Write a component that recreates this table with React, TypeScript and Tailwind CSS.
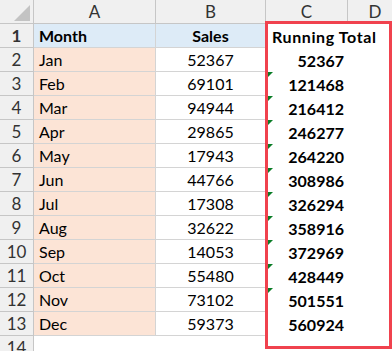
import React from "react";

const rows = [
  { m: "Jan", s: 52367, t: 52367 },
  { m: "Feb", s: 69101, t: 121468 },
  { m: "Mar", s: 94944, t: 216412 },
  { m: "Apr", s: 29865, t: 246277 },
  { m: "May", s: 17943, t: 264220 },
  { m: "Jun", s: 44766, t: 308986 },
  { m: "Jul", s: 17308, t: 326294 },
  { m: "Aug", s: 32622, t: 358916 },
  { m: "Sep", s: 14053, t: 372969 },
  { m: "Oct", s: 55480, t: 428449 },
  { m: "Nov", s: 73102, t: 501551 },
  { m: "Dec", s: 59373, t: 560924 },
];

function RowHead({ n }: { n: number }) {
  return (
    <div className="w-[34px] shrink-0 h-full flex items-center justify-center bg-[#f0f0f0] border-r border-b border-[#c6c6c6] text-[17px] text-[#333]">
      {n}
    </div>
  );
}

function Flag() {
  return (
    <svg className="absolute left-0 top-0" width="7" height="7" viewBox="0 0 7 7">
      <polygon points="0,0 7,0 0,7" fill="#0a7d27" />
    </svg>
  );
}

export default function App() {
  return (
    <div
      className="relative w-[392px] h-[351px] overflow-hidden bg-white text-black"
      style={{ fontFamily: "Lato, 'Noto Sans', sans-serif" }}
    >
      {/* column headers */}
      <div className="flex h-[24px] bg-[#f0f0f0] text-[17px] text-[#333]">
        <div className="relative w-[34px] shrink-0 border-r border-b border-[#c6c6c6]">
          <svg className="absolute left-[14px] top-[5px]" width="16" height="16" viewBox="0 0 16 16">
            <polygon points="16,0 16,16 0,16" fill="#c3c3c3" />
          </svg>
        </div>
        <div className="w-[122px] shrink-0 flex items-center justify-center border-r border-b border-[#c6c6c6]">A</div>
        <div className="w-[110px] shrink-0 flex items-center justify-center border-r border-b border-[#c6c6c6]">B</div>
        <div className="w-[82px] shrink-0 flex items-center justify-center border-r border-b border-[#c6c6c6]">C</div>
        <div className="flex-1 flex items-center justify-center pl-[10px] border-b border-[#c6c6c6]">D</div>
      </div>

      {/* row 1 */}
      <div className="flex h-[24px] text-[16px] font-bold">
        <RowHead n={1} />
        <div className="w-[122px] shrink-0 flex items-center pl-[5px] pt-[1px] bg-[#ddebf7] border-r border-b border-[#d4d4d4]">Month</div>
        <div className="w-[110px] shrink-0 flex items-center justify-center pt-[1px] bg-[#ddebf7] border-r border-b border-[#d4d4d4]">Sales</div>
        <div className="w-[82px] shrink-0 flex items-center pl-[6px] pt-[1px] whitespace-nowrap tracking-[0.6px]">Running Total</div>
        <div className="flex-1" />
      </div>

      {rows.map((r, i) => (
        <div key={r.m} className="flex h-[24px] text-[16px]">
          <RowHead n={i + 2} />
          <div className="w-[122px] shrink-0 flex items-center pl-[5px] pt-[1px] bg-[#fce4d6] border-r border-b border-[#d4d4d4]">{r.m}</div>
          <div className="w-[110px] shrink-0 flex items-center justify-center pt-[1px] border-r border-b border-[#d4d4d4]">{r.s}</div>
          <div className="relative w-[82px] shrink-0 flex items-center justify-end pr-[4px] pt-[1px] font-bold">
            {i > 0 && i < 11 && <Flag />}
            {r.t}
          </div>
          <div className="flex-1" />
        </div>
      ))}

      {/* row 14 */}
      <div className="flex h-[24px]">
        <RowHead n={14} />
        <div className="flex-1" />
      </div>

      {/* highlight box */}
      <div className="absolute left-[265px] top-[21px] w-[127px] h-[328px] border-[3px] border-[#f0424e] pointer-events-none" />
    </div>
  );
}
